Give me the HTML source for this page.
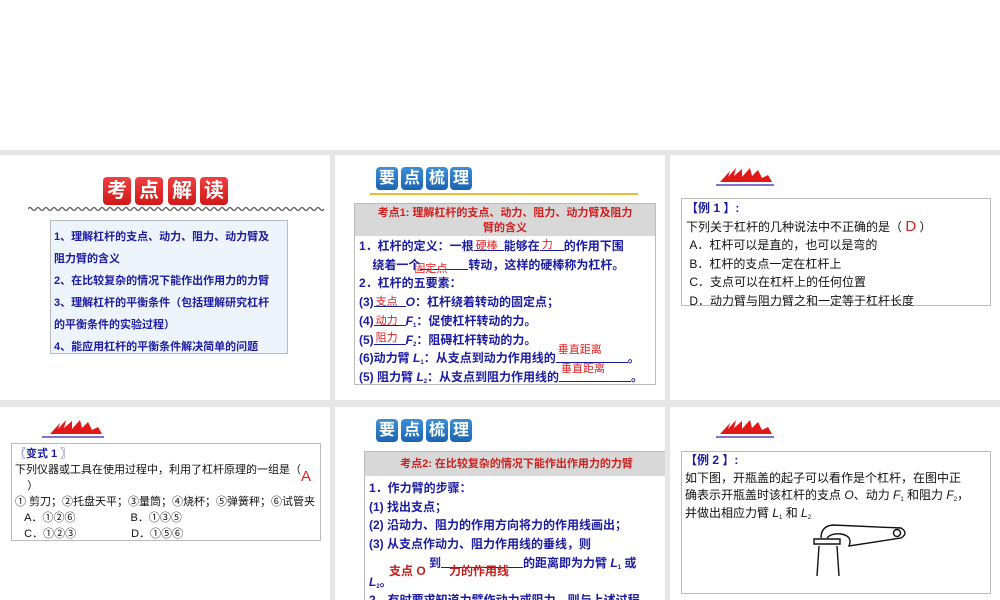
<!DOCTYPE html>
<html><head><meta charset="utf-8"><style>
*{margin:0;padding:0;box-sizing:border-box}
body{width:1000px;height:600px;background:#fff;position:relative;overflow:hidden;font-family:"Liberation Sans","Noto Sans CJK SC",sans-serif}
.bg{position:absolute;left:0;top:150px;width:1000px;height:450px;background:#e6e6e6}
.s{position:absolute;background:#fff;overflow:hidden}
.a{position:absolute;white-space:nowrap}
.tile{position:absolute;color:#fff;font-weight:bold;text-align:center;border-radius:4px}
.r{background:linear-gradient(#f04040,#d01818);width:28px;height:28px;line-height:28px;font-size:20px;top:22px}
.b{background:linear-gradient(#3c8fd8,#1c64b0);width:22px;height:23px;line-height:23px;font-size:16px;top:12px}
.blue{color:#1c1ca0;font-weight:bold}
.red{color:#e02020}
.box{position:absolute;border:1px solid #bbb}
sub{font-size:6px;line-height:0;vertical-align:-2px}
.bl{display:inline-block;position:relative;border-bottom:1px solid #1c1ca0;height:13px;vertical-align:-1px;font-style:normal}
.bl span{position:absolute;left:2px;color:#e02020;font-weight:normal;font-style:normal;font-size:11px;line-height:12px}
</style></head><body>
<div class="bg"></div>

<!-- slide 1 -->
<div class="s" style="left:0;top:155px;width:330px;height:245px">
 <div class="tile r" style="left:103px">考</div><div class="tile r" style="left:135px">点</div><div class="tile r" style="left:168px">解</div><div class="tile r" style="left:200px">读</div>
 <svg class="a" style="left:28px;top:51px" width="300" height="6"><path d="M0 3 Q2 0 4 3 T8 3 T12 3 T16 3 T20 3 T24 3 T28 3 T32 3 T36 3 T40 3 T44 3 T48 3 T52 3 T56 3 T60 3 T64 3 T68 3 T72 3 T76 3 T80 3 T84 3 T88 3 T92 3 T96 3 T100 3 T104 3 T108 3 T112 3 T116 3 T120 3 T124 3 T128 3 T132 3 T136 3 T140 3 T144 3 T148 3 T152 3 T156 3 T160 3 T164 3 T168 3 T172 3 T176 3 T180 3 T184 3 T188 3 T192 3 T196 3 T200 3 T204 3 T208 3 T212 3 T216 3 T220 3 T224 3 T228 3 T232 3 T236 3 T240 3 T244 3 T248 3 T252 3 T256 3 T260 3 T264 3 T268 3 T272 3 T276 3 T280 3 T284 3 T288 3 T292 3 T296 3" fill="none" stroke="#555" stroke-width="1.3"/></svg>
 <div class="box" style="left:50px;top:65px;width:238px;height:134px;background:#eef4fc">
  <div class="a blue" style="left:3px;top:5px;font-size:11px;line-height:22px">1、理解杠杆的支点、动力、阻力、动力臂及<br>阻力臂的含义<br>2、在比较复杂的情况下能作出作用力的力臂<br>3、理解杠杆的平衡条件（包括理解研究杠杆<br>的平衡条件的实验过程）<br>4、能应用杠杆的平衡条件解决简单的问题</div>
 </div>
</div>

<!-- slide 2 -->
<div class="s" style="left:335px;top:155px;width:330px;height:245px">
 <div class="tile b" style="left:41px">要</div><div class="tile b" style="left:66px">点</div><div class="tile b" style="left:91px">梳</div><div class="tile b" style="left:115px">理</div>
 <div class="a" style="left:35px;top:38px;width:268px;height:2px;background:#e8c030"></div>
 <div class="box" style="left:19px;top:48px;width:302px;height:182px">
  <div style="background:#d8d8d8;height:32px;color:#d02020;font-weight:bold;font-size:11px;text-align:center;line-height:15px;padding-top:2px">考点1: 理解杠杆的支点、动力、阻力、动力臂及阻力<br>臂的含义</div>
  <div class="a blue" style="left:4px;top:33px;font-size:12px;line-height:18.7px">1．杠杆的定义：一根<i class="bl" style="width:30px"><span style="top:2px">硬棒</span></i>能够在<i class="bl" style="width:24px"><span style="top:1px">力</span></i>的作用下围<br>&nbsp;&nbsp;&nbsp;&nbsp;绕着一个<i class="bl" style="width:48px"><span style="top:6px;left:-6px">固定点</span></i>转动，这样的硬棒称为杠杆。<br>2．杠杆的五要素：<br>(3)<i class="bl" style="width:32px"><span style="top:2px">支点</span></i><i>O</i>：杠杆绕着转动的固定点；<br>(4)<i class="bl" style="width:32px"><span style="top:2px">动力</span></i><i>F</i><sub>1</sub>：促使杠杆转动的力。<br>(5)<i class="bl" style="width:32px"><span style="top:0">阻力</span></i><i>F</i><sub>2</sub>：阻碍杠杆转动的力。<br>(6)动力臂 <i>L</i><sub>1</sub>：从支点到动力作用线的<i class="bl" style="width:72px"><span style="top:-6px">垂直距离</span></i>。<br>(5) 阻力臂 <i>L</i><sub>2</sub>：从支点到阻力作用线的<i class="bl" style="width:72px"><span style="top:-6px">垂直距离</span></i>。</div>
 </div>
</div>

<!-- slide 3 -->
<div class="s" style="left:670px;top:155px;width:330px;height:245px">
 <svg class="a" style="left:42px;top:10px" width="62" height="22"><path d="M8 17 L18 6 L16 12 L24 3 L22 11 L30 4 L30 12 L38 3 L40 11 L46 5 L50 13 L56 10 L60 17 Z" fill="#e01818"/><path d="M4 20 H62" stroke="#6040c0" stroke-width="1.5"/></svg>
 <div class="box" style="left:11px;top:43px;width:310px;height:108px">
  <div class="a" style="left:4px;top:0;font-size:12px;line-height:18.5px;color:#111"><b style="color:#1c1ca0">【例 1 】:</b><br>下列关于杠杆的几种说法中不正确的是（ <span class="red" style="font-size:15px;line-height:10px">D</span> ）<br>&nbsp;A．杠杆可以是直的，也可以是弯的<br>&nbsp;B．杠杆的支点一定在杠杆上<br>&nbsp;C．支点可以在杠杆上的任何位置<br>&nbsp;D．动力臂与阻力臂之和一定等于杠杆长度</div>
 </div>
</div>

<!-- slide 4 -->
<div class="s" style="left:0;top:407px;width:330px;height:193px">
 <svg class="a" style="left:40px;top:10px" width="64" height="22"><path d="M10 17 L20 6 L18 12 L26 3 L24 11 L32 4 L32 12 L40 3 L42 11 L48 5 L52 13 L58 10 L62 17 Z" fill="#e01818"/><path d="M2 20 H64" stroke="#6040c0" stroke-width="1.5"/></svg>
 <div class="box" style="left:11px;top:36px;width:310px;height:98px">
  <div class="a" style="left:3px;top:2px;font-size:11px;line-height:16px;color:#111"><b style="color:#1c1ca0">〖变式 1 〗</b><br>下列仪器或工具在使用过程中，利用了杠杆原理的一组是（<br>&nbsp;&nbsp;&nbsp;&nbsp;）<br>① 剪刀；②托盘天平；③量筒；④烧杯；⑤弹簧秤；⑥试管夹<br>&nbsp;&nbsp;&nbsp;A．①②⑥&nbsp;&nbsp;&nbsp;&nbsp;&nbsp;&nbsp;&nbsp;&nbsp;&nbsp;&nbsp;&nbsp;&nbsp;&nbsp;&nbsp;&nbsp;&nbsp;&nbsp;&nbsp;B．①③⑤<br>&nbsp;&nbsp;&nbsp;C．①②③&nbsp;&nbsp;&nbsp;&nbsp;&nbsp;&nbsp;&nbsp;&nbsp;&nbsp;&nbsp;&nbsp;&nbsp;&nbsp;&nbsp;&nbsp;&nbsp;&nbsp;&nbsp;D．①⑤⑥</div>
  <div class="a red" style="left:289px;top:24px;font-size:15px">A</div>
 </div>
</div>

<!-- slide 5 -->
<div class="s" style="left:335px;top:407px;width:330px;height:193px">
 <div class="tile b" style="left:41px">要</div><div class="tile b" style="left:66px">点</div><div class="tile b" style="left:91px">梳</div><div class="tile b" style="left:115px">理</div>
 <div class="box" style="left:29px;top:44px;width:305px;height:160px">
  <div style="background:#d8d8d8;height:24px;color:#d02020;font-weight:bold;font-size:11px;text-align:center;line-height:24px">考点2: 在比较复杂的情况下能作出作用力的力臂</div>
  <div class="a blue" style="left:4px;top:27px;font-size:12px;line-height:18.7px">1．作力臂的步骤：<br>(1) 找出支点；<br>(2) 沿动力、阻力的作用方向将力的作用线画出；<br>(3) 从支点作动力、阻力作用线的垂线，则<br>&nbsp;&nbsp;&nbsp;&nbsp;&nbsp;&nbsp;&nbsp;&nbsp;&nbsp;&nbsp;&nbsp;&nbsp;&nbsp;&nbsp;&nbsp;&nbsp;&nbsp;&nbsp;到<i class="bl" style="width:82px"></i>的距离即为力臂 <i>L</i><sub>1</sub> 或<br><i>L</i><sub>2</sub>。<br>2．有时要求知道力臂作动力或阻力，则与上述过程</div>
  <div class="a" style="left:24px;top:110px;font-size:12px;font-weight:bold;color:#c02020">支点 O</div>
  <div class="a" style="left:84px;top:110px;font-size:12px;font-weight:bold;color:#c02020">力的作用线</div>
 </div>
</div>

<!-- slide 6 -->
<div class="s" style="left:670px;top:407px;width:330px;height:193px">
 <svg class="a" style="left:42px;top:10px" width="62" height="22"><path d="M8 17 L18 6 L16 12 L24 3 L22 11 L30 4 L30 12 L38 3 L40 11 L46 5 L50 13 L56 10 L60 17 Z" fill="#e01818"/><path d="M4 20 H62" stroke="#6040c0" stroke-width="1.5"/></svg>
 <div class="box" style="left:11px;top:44px;width:310px;height:143px">
  <div class="a" style="left:3px;top:0;font-size:12px;line-height:17.5px;color:#111"><b style="color:#1c1ca0">【例 2 】:</b><br>如下图，开瓶盖的起子可以看作是个杠杆，在图中正<br>确表示开瓶盖时该杠杆的支点 <i>O</i>、动力 <i>F</i><sub>1</sub> 和阻力 <i>F</i><sub>2</sub>，<br>并做出相应力臂 <i>L</i><sub>1</sub> 和 <i>L</i><sub>2</sub></div>
  <svg class="a" style="left:131px;top:70px" width="100" height="56" fill="none" stroke="#111" stroke-width="1.4">
   <path d="M4 54 L6 24 M26 54 L24 24"/>
   <path d="M1 17 H27 V22 H1 Z"/>
   <path d="M8 16 Q8 4 20 3 L88 6 Q96 11 88 16 L36 24 Q40 14 28 12 Q18 11 14 16"/>
   <circle cx="84" cy="11" r="3.5"/>
  </svg>
 </div>
</div>
</body></html>
